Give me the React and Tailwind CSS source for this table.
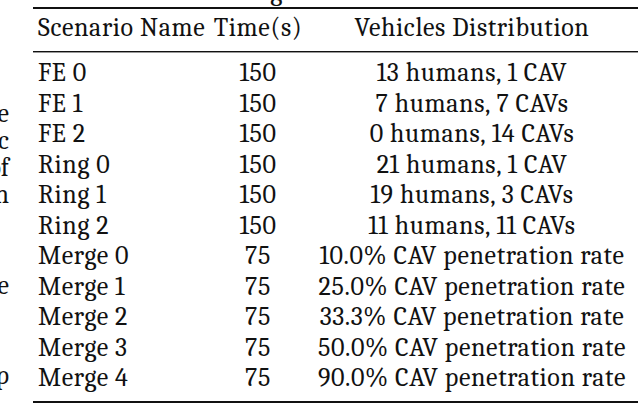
import React from 'react';

const rows = [
  ['FE 0', '150', '13 humans, 1 CAV'],
  ['FE 1', '150', '7 humans, 7 CAVs'],
  ['FE 2', '150', '0 humans, 14 CAVs'],
  ['Ring 0', '150', '21 humans, 1 CAV'],
  ['Ring 1', '150', '19 humans, 3 CAVs'],
  ['Ring 2', '150', '11 humans, 11 CAVs'],
  ['Merge 0', '75', '10.0% CAV penetration rate'],
  ['Merge 1', '75', '25.0% CAV penetration rate'],
  ['Merge 2', '75', '33.3% CAV penetration rate'],
  ['Merge 3', '75', '50.0% CAV penetration rate'],
  ['Merge 4', '75', '90.0% CAV penetration rate'],
];

// clipped tail of the neighbouring text column
const Margin = () => (
  <div className="w-[9px] shrink-0 flex flex-col leading-[27px] text-[26px]">
    <div className="mt-[101px] flex justify-end whitespace-nowrap">the</div>
    <div className="flex justify-end whitespace-nowrap">traffic</div>
    <div className="flex justify-end whitespace-nowrap">of</div>
    <div className="flex justify-end whitespace-nowrap">in</div>
    <div className="mt-[64px] flex justify-end whitespace-nowrap">the</div>
    <div className="mt-[63px] flex justify-end whitespace-nowrap">up</div>
  </div>
);

export default function App() {
  return (
    <div className="w-[640px] h-[405px] bg-white overflow-hidden flex text-[#111] font-serif">
      <Margin />
      <div className="ml-[24px] w-[605px] shrink-0 flex flex-col text-[26px] tracking-[0.6px]">
        <div className="h-[7px] overflow-hidden">
          <div className="-mt-[21px] leading-[26px] text-center whitespace-nowrap">
            Table 1: Configuration of the Scenarios
          </div>
        </div>
        <div className="h-[2px] bg-[#111]" />
        <div className="h-[42px] pt-[4px] grid grid-cols-[177px_96px_1fr] leading-[30.5px]">
          <div className="pl-[5px] whitespace-nowrap">Scenario Name</div>
          <div className="text-center whitespace-nowrap">Time(s)</div>
          <div className="text-center whitespace-nowrap">Vehicles Distribution</div>
        </div>
        <div className="h-px bg-[#111]" />
        <div className="h-px bg-[#999]" />
        <div className="pt-[5px] flex flex-col leading-[30.5px]">
          {rows.map((r) => (
            <div key={r[0]} className="h-[30.5px] grid grid-cols-[177px_96px_1fr]">
              <div className="pl-[5px] whitespace-nowrap">{r[0]}</div>
              <div className="text-center whitespace-nowrap">{r[1]}</div>
              <div className="text-center whitespace-nowrap">{r[2]}</div>
            </div>
          ))}
        </div>
        <div className="mt-[7.5px] h-[2px] bg-[#111]" />
      </div>
    </div>
  );
}
